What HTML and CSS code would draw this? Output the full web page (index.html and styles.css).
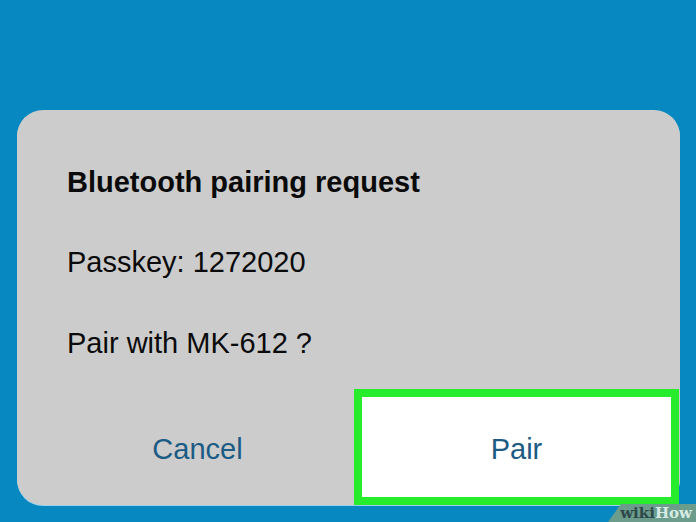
FILE: index.html
```html
<!DOCTYPE html>
<html lang="en">
<head>
    <meta charset="UTF-8">
    <meta name="viewport" content="width=device-width, initial-scale=1.0">
    <title>Bluetooth pairing request</title>
    <link rel="stylesheet" href="styles.css">
</head>
<body>
    <div class="dialog">
        <div class="dialog-body">
            <div class="dialog-title">Bluetooth pairing request</div>
            <div class="dialog-line">Passkey: 1272020</div>
            <div class="dialog-line">Pair with MK-612 ?</div>
        </div>
        <div class="dialog-actions">
            <div class="action action-cancel">Cancel</div>
            <div class="action action-pair">Pair</div>
        </div>
    </div>

    <!-- watermark -->
    <div class="watermark"><span class="wm-wiki">wiki</span><span class="wm-how">How</span></div>
</body>
</html>
```

FILE: styles.css
```css
body {
    font-family: "Liberation Sans", Arial, sans-serif;
    margin: 0;
    padding: 110px 16px 0 17px;
    height: 522px;
    box-sizing: border-box;
    background-color: #0888c0;
    overflow: hidden;
    position: relative;
}
.dialog {
    height: 395px;
    background-color: #cccccc;
    border-radius: 26px;
    display: flex;
    flex-direction: column;
    box-shadow: 0 1px 0 #9fd2ea;
}
.dialog-body {
    padding: 32px 0 0 50px;
    color: #0a0a0a;
    font-size: 29px;
    line-height: 80px;
}
.dialog-title {
    font-weight: bold;
}
.dialog-line {
    margin-top: 0;
}
.dialog-line + .dialog-line {
    margin-top: 1px;
}
.dialog-actions {
    margin-top: auto;
    height: 116px;
    display: flex;
}
.action {
    display: flex;
    align-items: center;
    justify-content: center;
    font-size: 29px;
    line-height: 34px;
    padding-top: 4px;
    box-sizing: border-box;
    color: #1b5b84;
}
.action-cancel {
    flex: 1;
    padding-left: 24px;
}
.action-pair {
    width: 325px;
    margin-right: 1px;
    background-color: #ffffff;
    border: 8px solid #27ec2c;
}
.watermark {
    position: absolute;
    right: 0;
    bottom: 0;
    width: 88px;
    height: 18px;
    background-color: #6c9c8c;
    clip-path: polygon(13px 0, 100% 0, 100% 100%, 0 100%);
    font-family: "DejaVu Serif", "Liberation Serif", serif;
    font-weight: bold;
    font-size: 15px;
    line-height: 18px;
    text-align: right;
    padding-right: 4px;
    box-sizing: border-box;
}
.wm-wiki {
    color: #2c4848;
}
.wm-how {
    color: #d6ebe4;
}
```
